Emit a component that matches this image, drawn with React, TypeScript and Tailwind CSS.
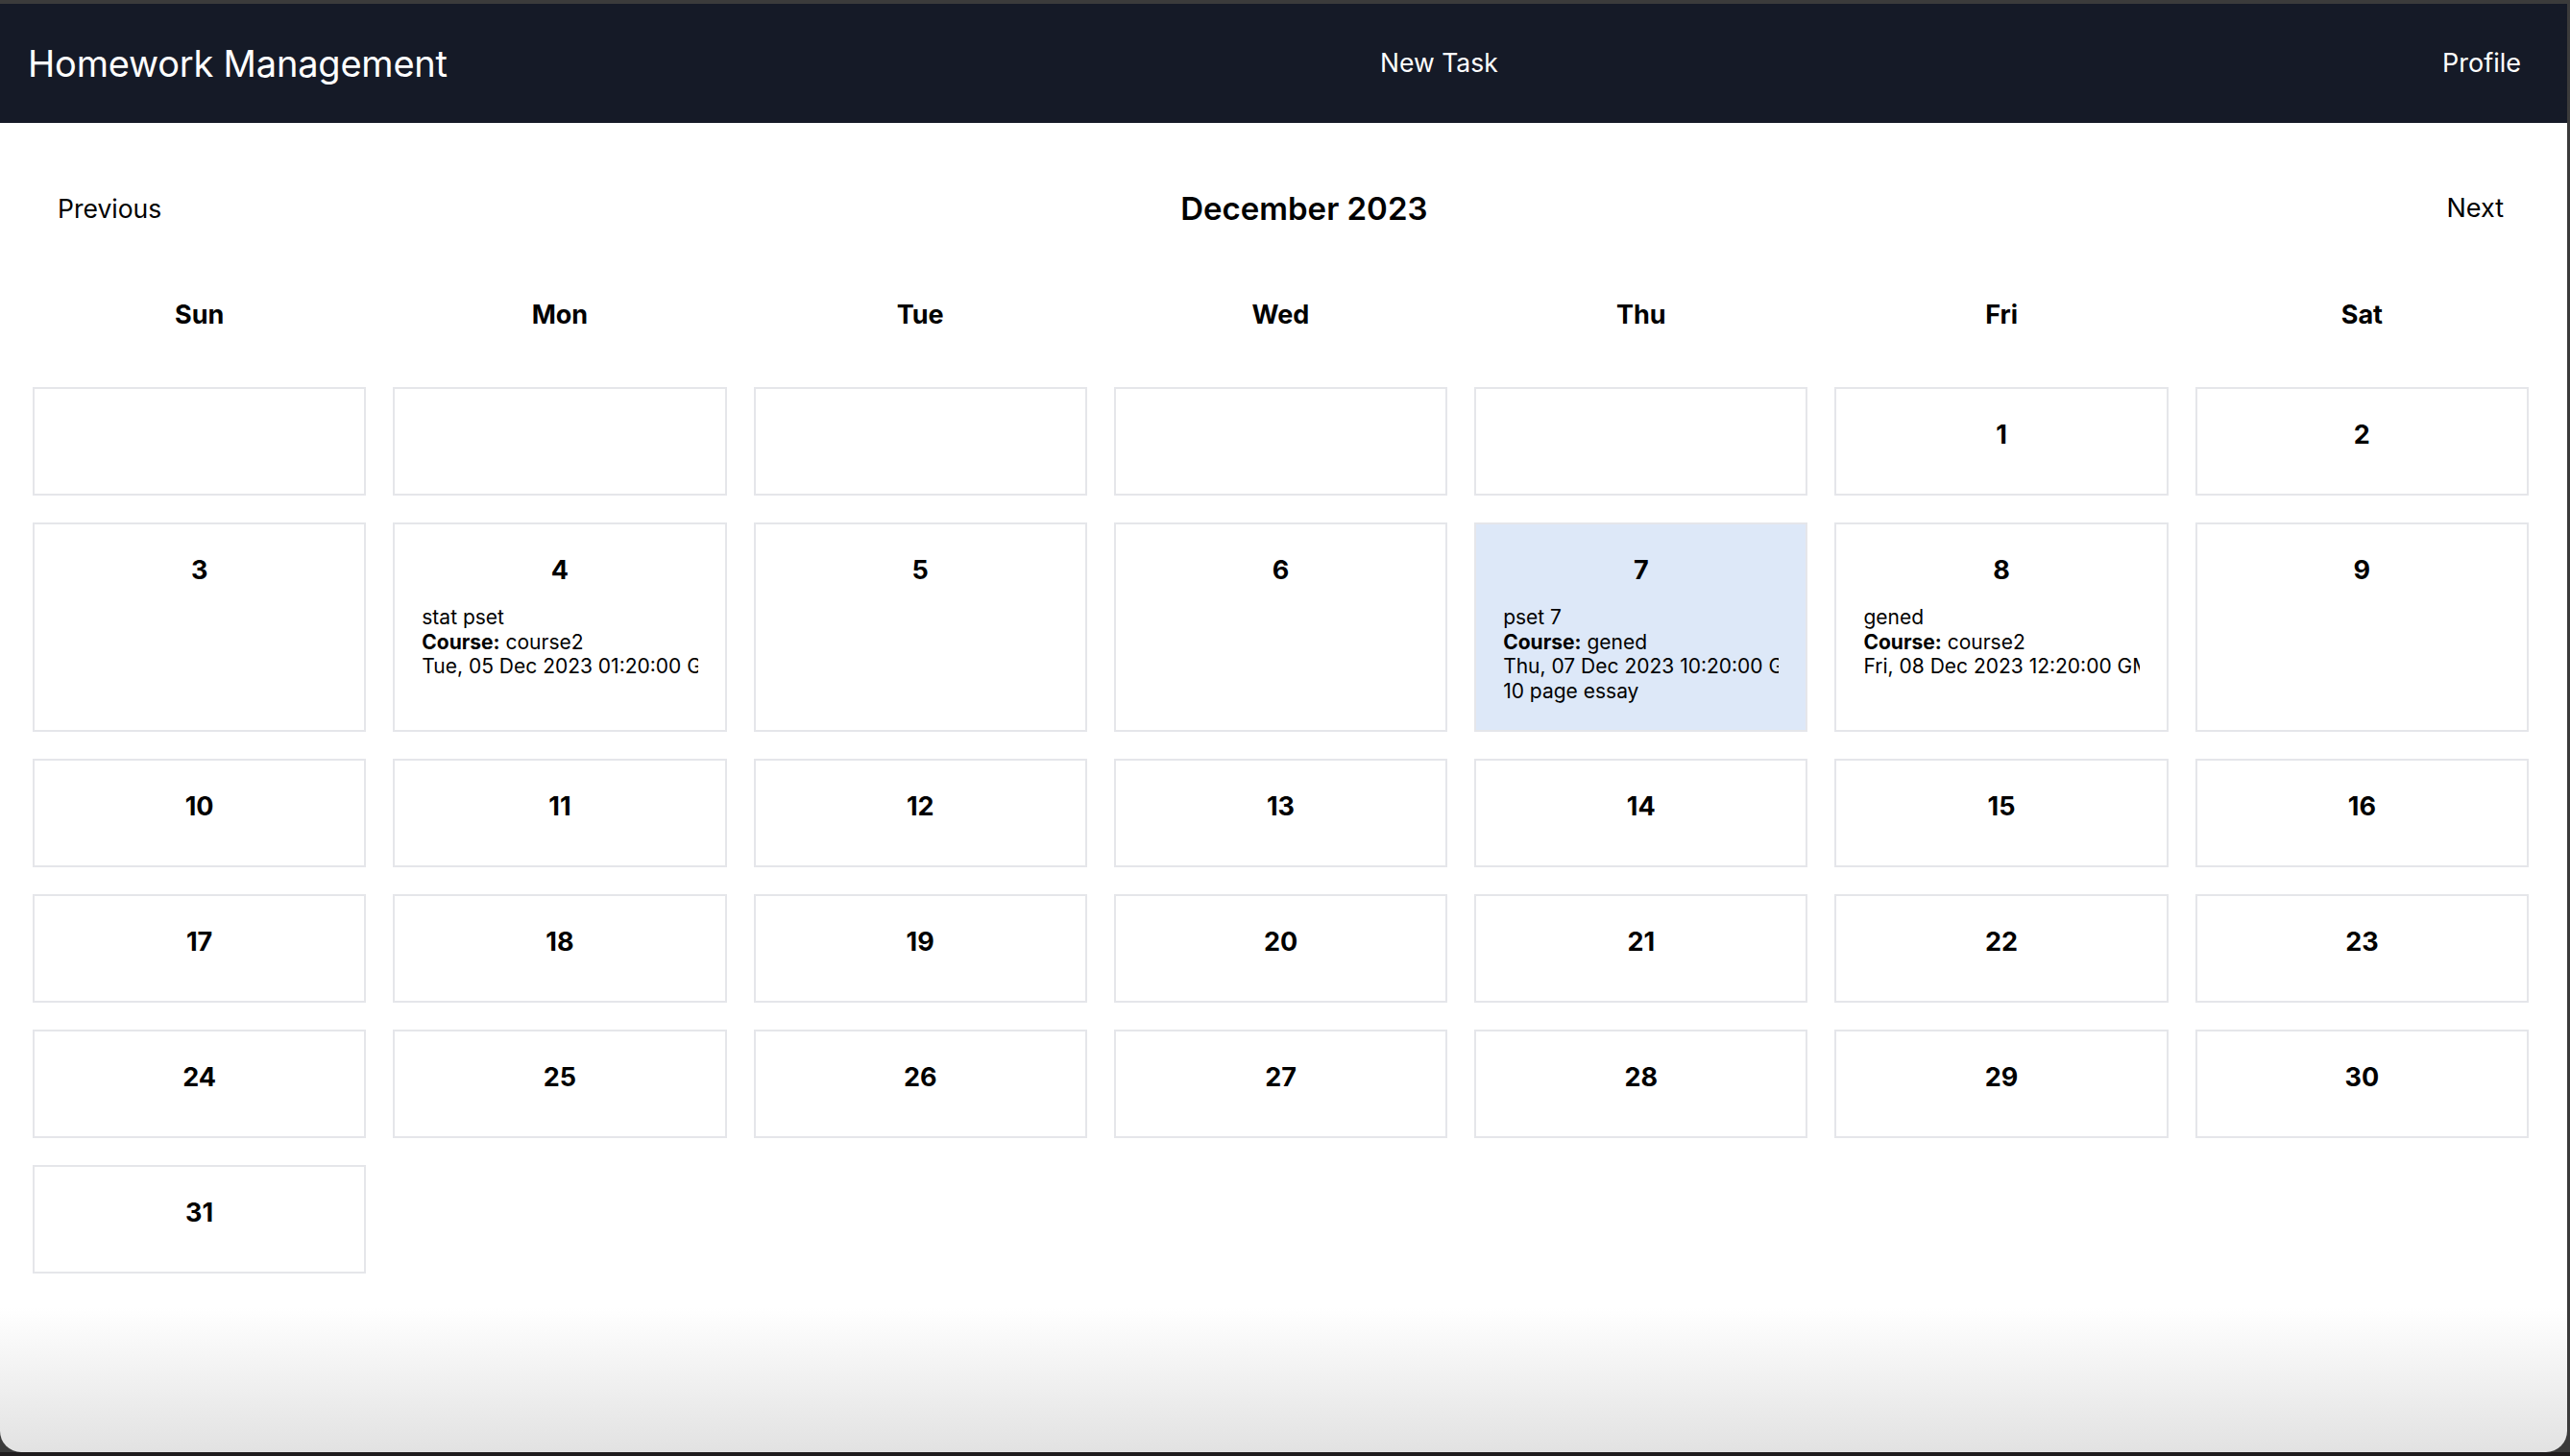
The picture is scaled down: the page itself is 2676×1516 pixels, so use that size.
const weekDays = ["Sun", "Mon", "Tue", "Wed", "Thu", "Fri", "Sat"]

type Task = {
    title: string
    course: string
    due: string
    description?: string
}

const tasks: Record<number, Task[]> = {
    4: [{ title: "stat pset", course: "course2", due: "Tue, 05 Dec 2023 01:20:00 GMT" }],
    7: [{ title: "pset 7", course: "gened", due: "Thu, 07 Dec 2023 10:20:00 GMT", description: "10 page essay" }],
    8: [{ title: "gened", course: "course2", due: "Fri, 08 Dec 2023 12:20:00 GMT" }],
}

const highlighted = 7
const firstWeekday = 5
const daysInMonth = 31

const DayCell = ({ day }: { day: number | null }) => {
    const dayTasks = day ? tasks[day] ?? [] : []
    return (
        <div
            className={`border-2 border-[#e5e6ea] p-[28px] min-w-0 ${day === highlighted ? "bg-[#dde8f8]" : "bg-white"}`}
        >
            {day && (
                <>
                    <div className="text-center font-bold text-[27px] leading-[38px] mt-[1px] mb-[14px] text-black">{day}</div>
                    {dayTasks.map((task, id) => (
                        <div key={id} className="pt-[3px] text-[21px] leading-[25.5px] text-black">
                            <div className="whitespace-nowrap overflow-hidden">{task.title}</div>
                            <div className="whitespace-nowrap overflow-hidden">
                                <span className="font-bold">Course:</span> {task.course}
                            </div>
                            <div className="whitespace-nowrap overflow-hidden">{task.due}</div>
                            {task.description && (
                                <div className="whitespace-nowrap overflow-hidden">{task.description}</div>
                            )}
                        </div>
                    ))}
                </>
            )}
        </div>
    )
}

const App = () => {
    const cells: (number | null)[] = [
        ...Array.from({ length: firstWeekday }, () => null),
        ...Array.from({ length: daysInMonth }, (_, i) => i + 1),
    ]

    return (
        <div className="w-full h-[1516px] bg-[#3b3b3b] flex flex-col pt-[4px] font-['Inter','Liberation_Sans',sans-serif]">
            <div className="flex-1 flex flex-col mr-[3px] bg-[linear-gradient(to_bottom,#ffffff_0%,#ffffff_90%,#e2e2e2_100%)] rounded-b-[22px] overflow-hidden">
                <header className="h-[124px] shrink-0 bg-[#151a27] flex items-center justify-between pl-[29px] pr-[36px] text-white">
                    <h1 className="text-[38px] font-normal tracking-[-0.2px]">Homework Management</h1>
                    <a className="px-[12px] text-[26.5px]">New Task</a>
                    <a className="px-[12px] text-[27px]">Profile</a>
                </header>

                <main className="pl-[34px] pr-[40px] pt-[69px]">
                    <div className="flex items-center justify-between px-[26px] h-[40px] text-black">
                        <button className="text-[26.5px] leading-[40px]">Previous</button>
                        <h2 className="text-[33px] font-semibold leading-[40px]">December 2023</h2>
                        <button className="text-[27px] leading-[40px]">Next</button>
                    </div>

                    <div className="grid grid-cols-7 gap-[28px] mt-[71px] mb-[55px]">
                        {weekDays.map((d) => (
                            <div key={d} className="text-center font-bold text-[27px] leading-[40px] text-black">
                                {d}
                            </div>
                        ))}
                    </div>

                    <div className="grid grid-cols-7 gap-[28px]">
                        {cells.map((day, id) => (
                            <DayCell key={id} day={day} />
                        ))}
                    </div>
                </main>
            </div>
            <div className="h-[4px] shrink-0 bg-[#1f1c1d]" />
        </div>
    )
}

export default App
